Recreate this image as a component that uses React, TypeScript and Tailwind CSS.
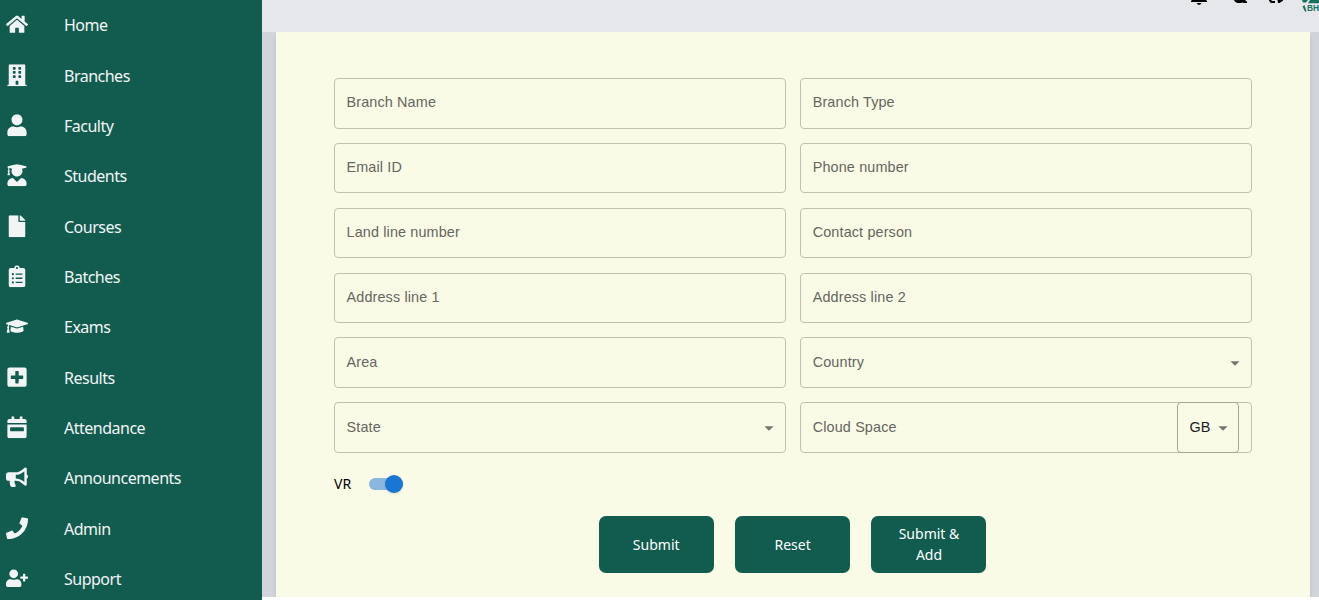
import React from 'react';
import {
  FaHome, FaBuilding, FaUser, FaUserGraduate, FaFile, FaClipboardList, FaGraduationCap,
  FaPlusSquare, FaCalendarWeek, FaBullhorn, FaPhone, FaUserPlus,
} from 'react-icons/fa';

const nav = [
  { label: 'Home', Icon: FaHome },
  { label: 'Branches', Icon: FaBuilding },
  { label: 'Faculty', Icon: FaUser },
  { label: 'Students', Icon: FaUserGraduate },
  { label: 'Courses', Icon: FaFile },
  { label: 'Batches', Icon: FaClipboardList },
  { label: 'Exams', Icon: FaGraduationCap },
  { label: 'Results', Icon: FaPlusSquare },
  { label: 'Attendance', Icon: FaCalendarWeek },
  { label: 'Announcements', Icon: FaBullhorn },
  { label: 'Admin', Icon: FaPhone },
  { label: 'Support', Icon: FaUserPlus },
];

const fields = [
  'Branch Name', 'Branch Type', 'Email ID', 'Phone number', 'Land line number', 'Contact person',
  'Address line 1', 'Address line 2', 'Area', 'Country', 'State', 'Cloud Space',
];

function Arrow() {
  return (
    <svg width="22" height="22" viewBox="0 0 24 24" fill="#757570" className="shrink-0">
      <path d="M7 10l5 5 5-5z" />
    </svg>
  );
}

function Field({ label }: { label: string }) {
  const select = label === 'Country' || label === 'State';
  return (
    <div className="flex h-[50.6px] items-center rounded-[4px] border border-[#c0c1b1] pl-[11.5px] pr-[5px] text-[14.4px] tracking-[0.14px] text-[#666660]">
      <span className="grow -translate-y-[0.4px]">{label}</span>
      {select && <Arrow />}
      {label === 'Cloud Space' && (
        <div className="-my-px mr-[7px] flex h-[50.6px] w-[62px] items-center rounded-[4px] border border-[#a5a698] pl-[11.5px] text-[#20201e]">
          <span className="mr-[1px]">GB</span>
          <Arrow />
        </div>
      )}
    </div>
  );
}

function HeaderIcons() {
  return (
    <div className="flex items-start">
      <svg width="16" height="6" viewBox="0 0 16 6" className="mr-[27px]">
        <path d="M1 0h14l1 1V2H0V1z" />
        <path d="M5.5 3h5L9 4.8H7z" />
      </svg>
      <svg width="14" height="5" viewBox="0 0 14 5" className="mr-[21px]">
        <path d="M0 0h11l2 1.8V3H9.5L8.5 2.5 7 3H4C2 3 .7 1.6 0 0z" />
      </svg>
      <svg width="15" height="5" viewBox="0 0 15 5" className="mr-[18px]">
        <path d="M0 0h2.2l1 1H6v2H2.5C1.2 3 .3 1.6 0 0zM8.5 0H14v.8L10.5 3H9z" />
      </svg>
      <div className="flex flex-col text-[#17705f]">
        <svg width="17" height="4" viewBox="0 0 17 4" fill="currentColor" className="shrink-0">
          <path d="M0 0h6L4 2.5H1zM8 0h9v3.2H6z" />
        </svg>
        <div className="flex">
          <svg width="5" height="8" viewBox="0 0 5 8" fill="currentColor">
            <path d="M.5 2.5L2.5 1l2 6.5H3z" />
          </svg>
          <span className="text-[8.4px] font-bold leading-[9px]">BH</span>
        </div>
      </div>
    </div>
  );
}

export default function App() {
  return (
    <div className="flex h-[600px] w-[1319px] overflow-hidden bg-white font-['Liberation_Sans',sans-serif]">
      <nav className="h-[600px] w-[262px] shrink-0 bg-[#115c4e] font-['Noto_Sans',sans-serif] text-[#f3f4f6]">
        {nav.map(({ label, Icon }) => (
          <a key={label} className="flex h-[50.36px] items-center pl-[6px] text-[16px] tracking-[-0.5px]">
            <Icon size={22} className="mr-9 shrink-0 -translate-y-[0.8px]" />
            <span className="translate-y-[0.2px]">{label}</span>
          </a>
        ))}
      </nav>
      <div className="flex h-[597px] grow flex-col overflow-hidden bg-[#d1d5db]">
        <header className="z-10 flex h-8 shrink-0 items-start justify-end bg-[#e5e7eb]">
          <HeaderIcons />
        </header>
        <main className="ml-[14px] mr-[9px] grow bg-[#f9fbe7] px-[58px] pt-[46px] shadow-md">
          <div className="grid grid-cols-2 gap-x-[14.4px] gap-y-[14.25px]">
            {fields.map((f) => <Field key={f} label={f} />)}
          </div>
          <div className="mt-[17px] flex h-[28px] items-center font-['Noto_Sans',sans-serif] text-[14px] text-black">
            <span className="w-[35px]">VR</span>
            <span className="flex h-3 w-[34px] items-center justify-end rounded-full bg-[#8bb7de]">
              <span className="size-[18px] rounded-full bg-[#1976d2] shadow" />
            </span>
          </div>
          <div className="mt-[18px] mr-[0.8px] flex justify-center gap-[21.4px] font-['Noto_Sans',sans-serif] text-[14px] leading-[21px] text-white">
            {['Submit', 'Reset', 'Submit & Add'].map((t) => (
              <button key={t} className="h-[57px] w-[115px] rounded-[7px] bg-[#115c4e] px-5">{t}</button>
            ))}
          </div>
        </main>
      </div>
    </div>
  );
}
